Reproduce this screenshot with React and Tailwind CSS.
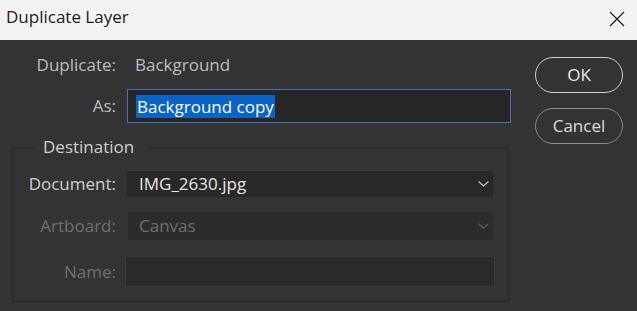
import React from "react";

const FONT = { fontFamily: '"Open Sans", "Noto Sans", sans-serif' };

function Chevron({ dim }) {
  return (
    <svg width="11" height="6" viewBox="0 0 11 6" className="shrink-0">
      <path
        d="M0.5 0.5 L5.5 5 L10.5 0.5"
        fill="none"
        stroke={dim ? "#5e5e5e" : "#c4c4c4"}
        strokeWidth="1.2"
      />
    </svg>
  );
}

function Row({ label, dim, children, className = "" }) {
  return (
    <div className={`flex items-center ${className}`}>
      <div
        className={`w-[103px] shrink-0 text-right text-[17px] leading-[24px] ${
          dim ? "text-[#6f6f6f]" : "text-[#cfcfcf]"
        }`}
      >
        {label}
      </div>
      {children}
    </div>
  );
}

export default function App() {
  return (
    <div className="w-[637px] h-[311px] overflow-hidden flex flex-col" style={FONT}>
      {/* Title bar */}
      <div className="h-[40px] shrink-0 bg-[#f3f3f3] flex items-start justify-between pl-[6px] pt-[5px]">
        <span className="text-[17px] leading-[24px] text-[#1a1a1a]">Duplicate Layer</span>
        <svg width="16" height="16" viewBox="0 0 16 16" className="mt-[6px] mr-[12px]">
          <path d="M1 1 L15 15 M15 1 L1 15" stroke="#1c1c1c" strokeWidth="1.2" fill="none" />
        </svg>
      </div>

      {/* Body */}
      <div className="flex-1 bg-[#333333] flex pt-[13px]">
        <div className="w-[511px] shrink-0 flex flex-col">
          <div className="flex items-center">
            <div className="w-[116px] text-right text-[17px] leading-[24px] text-[#bdbdbd]">Duplicate:</div>
            <div className="pl-[19px] text-[17px] leading-[24px] text-[#bdbdbd]">Background</div>
          </div>

          <div className="flex items-center mt-[12px]">
            <div className="w-[116px] text-right text-[17px] leading-[24px] text-[#bdbdbd]">As:</div>
            <div className="ml-[11px] flex-1 h-[34px] border border-[#4471c0] bg-[#262626] flex items-center pl-[8px]">
              <span className="bg-[#0a63c6] text-white text-[17px] leading-[23px] px-[1px]">Background copy</span>
            </div>
          </div>

          <fieldset className="ml-[12px] mt-[12px] w-[497px] border border-[#292929] pb-[14px]">
            <legend className="ml-[21px] pl-[9px] pr-[14px] text-[17px] leading-[24px] text-[#cfcfcf]">
              Destination
            </legend>

            <Row label="Document:" className="mt-[11px]">
              <div className="ml-[11px] w-[366px] h-[27px] bg-[#282828] border-t border-[#3a3a3a] flex items-center justify-between pl-[12px] pr-[4px]">
                <span className="text-[17px] leading-[24px] text-[#e6e6e6]">IMG_2630.jpg</span>
                <Chevron />
              </div>
            </Row>

            <Row label="Artboard:" dim className="mt-[15px]">
              <div className="ml-[12px] w-[365px] h-[28px] bg-[#2c2c2c] flex items-center justify-between pl-[11px] pr-[4px]">
                <span className="text-[17px] leading-[24px] text-[#6f6f6f]">Canvas</span>
                <Chevron dim />
              </div>
            </Row>

            <Row label="Name:" dim className="mt-[16px]">
              <div className="ml-[9px] w-[370px] h-[31px] bg-[#2a2a2a] border border-[#3b3b3b]" />
            </Row>
          </fieldset>
        </div>

        <div className="ml-[24px] mt-[4px] flex flex-col gap-[15px]">
          <button className="w-[88px] h-[36px] rounded-full border-[1.5px] border-[#cfcfcf] text-[17px] text-[#e8e8e8] flex items-center justify-center">
            OK
          </button>
          <button className="w-[88px] h-[36px] rounded-full border-[1.5px] border-[#8c8c8c] text-[17px] text-[#dcdcdc] flex items-center justify-center">
            Cancel
          </button>
        </div>
      </div>
    </div>
  );
}
